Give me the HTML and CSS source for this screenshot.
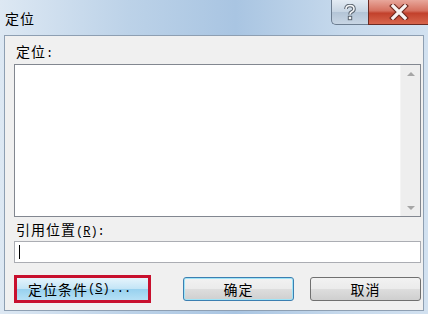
FILE: index.html
```html
<!DOCTYPE html>
<html lang="zh">
<head>
<meta charset="utf-8">
<link rel="stylesheet" href="styles.css">
</head>
<body>
<div class="window">
  <div class="titlebar">
    <span class="title">定位</span>
    <div class="caption-btns">
      <div class="cbtn help">
        <svg width="14" height="17" viewBox="0 0 14 17"><path d="M3 5 Q3 1.5 7 1.5 Q11 1.5 11 5 Q11 7 8.5 8 Q7 8.6 7 10.5" fill="none" stroke="#59636e" stroke-width="3.6"/><path d="M3 5 Q3 1.5 7 1.5 Q11 1.5 11 5 Q11 7 8.5 8 Q7 8.6 7 10.5" fill="none" stroke="#f4f6f8" stroke-width="1.6"/><rect x="5.3" y="12.3" width="3.4" height="3.4" fill="#f4f6f8" stroke="#59636e" stroke-width="1"/></svg>
      </div>
      <div class="cbtn close">
        <svg width="20" height="16" viewBox="0 0 20 16"><path d="M4 2 L16 14 M16 2 L4 14" stroke="#6e2a20" stroke-width="5.4" stroke-linecap="square"/><path d="M4 2 L16 14 M16 2 L4 14" stroke="#f7f3f2" stroke-width="3.2" stroke-linecap="square"/></svg>
      </div>
    </div>
  </div>
  <div class="body">
    <div class="label">定位<span class="hw">:</span></div>
    <div class="listbox">
      <div class="list-area"></div>
      <div class="scrollbar">
        <span class="arrow up"></span>
        <span class="arrow down"></span>
      </div>
    </div>
    <div class="label ref">引用位置<span class="hw">(<u>R</u>):</span></div>
    <div class="input"><span class="caret"></span></div>
    <div class="buttons">
      <div class="btn special">定位条件<span class="hw">(<u>S</u>)...</span></div>
      <div class="btn default">确定</div>
      <div class="btn cancel">取消</div>
    </div>
  </div>
</div>
</body>
</html>
```
FILE: styles.css
```css
* { box-sizing: border-box; }
html, body { margin: 0; padding: 0; }
body {
  width: 428px;
  height: 314px;
  overflow: hidden;
  background: #dfe8f2;
  font-family: "Noto Sans CJK SC", "Noto Sans", sans-serif;
  font-size: 14px;
  letter-spacing: 1px;
  color: #000;
}
.hw {
  font-family: "Liberation Mono", "DejaVu Sans Mono", monospace;
  font-size: 12px;
  letter-spacing: 0;
}
.window {
  width: 428px;
  height: 314px;
  display: flex;
  flex-direction: column;
  background: linear-gradient(90deg, #dde8f3 0%, #bcd2e8 30%, #a9c5e2 55%, #c6d9ec 80%, #d2e1f0 100%);
}
.titlebar {
  height: 35px;
  display: flex;
  justify-content: space-between;
  align-items: flex-start;
}
.title {
  padding: 9px 0 0 5px;
  font-size: 14px;
  line-height: 18px;
}
.caption-btns {
  display: flex;
}
.cbtn {
  height: 25px;
  display: flex;
  align-items: center;
  justify-content: center;
}
.help {
  width: 37px;
  border: 1px solid #6c7d90;
  border-top: none;
  border-right: none;
  border-radius: 0 0 0 5px;
  background: linear-gradient(180deg, #e3ebf3 0%, #c6d4e2 50%, #b3c4d6 51%, #c8d6e4 100%);
}
.close {
  width: 60px;
  border: 1px solid #6b2a22;
  border-top: none;
  border-right: none;
  background: linear-gradient(180deg, #e8a79b 0%, #d5705f 45%, #c2412c 55%, #d8664d 100%);
}
.body {
  flex: 1;
  margin: 0 4px 3px 4px;
  background: #f0f0f0;
  border: 1px solid #8e9fb2;
  padding: 6px 2px 0 9px;
  display: flex;
  flex-direction: column;
}
.label {
  line-height: 18px;
  height: 18px;
  padding-left: 2px;
}
.label u, .btn u { text-decoration: underline; }
.listbox {
  margin-top: 4px;
  height: 153px;
  border: 1px solid #828790;
  background: #fff;
  display: flex;
}
.list-area { flex: 1; }
.scrollbar {
  width: 20px;
  background: #eeeeee;
  border-left: 1px solid #f4f4f4;
  display: flex;
  flex-direction: column;
  justify-content: space-between;
  align-items: center;
  padding: 7px 0 6px;
}
.arrow {
  width: 0; height: 0;
  border-left: 4px solid transparent;
  border-right: 4px solid transparent;
}
.arrow.up { border-bottom: 4px solid #a6a6a6; }
.arrow.down { border-top: 4px solid #a6a6a6; }
.ref { margin-top: 3px; }
.input {
  margin-top: 3px;
  height: 22px;
  border: 1px solid #abadb3;
  background: #fff;
  display: flex;
  align-items: center;
  padding-left: 4px;
}
.caret {
  width: 1px;
  height: 14px;
  background: #000;
}
.buttons {
  margin-top: 12px;
  display: flex;
  align-items: center;
}
.btn {
  height: 24px;
  border: 1px solid #707070;
  border-radius: 3px;
  background: linear-gradient(180deg, #f2f2f2 0%, #ebebeb 48%, #dddddd 52%, #cfcfcf 100%);
  display: flex;
  align-items: center;
  justify-content: center;
  font-size: 14px;
}
.btn.special {
  width: 137px;
  height: 28px;
  border: 3px solid #c8102e;
  border-radius: 0;
  background: linear-gradient(180deg, #e5f4fc 0%, #c4e5f6 48%, #98d1ef 52%, #b6e0f5 100%);
  justify-content: flex-start;
  padding-left: 11px;
}
.btn.default {
  margin-left: 32px;
  width: 111px;
  border-color: #3c7fb1;
  box-shadow: inset 0 0 0 1px #9fe4f7;
}
.btn.cancel {
  margin-left: 16px;
  width: 111px;
}
```
